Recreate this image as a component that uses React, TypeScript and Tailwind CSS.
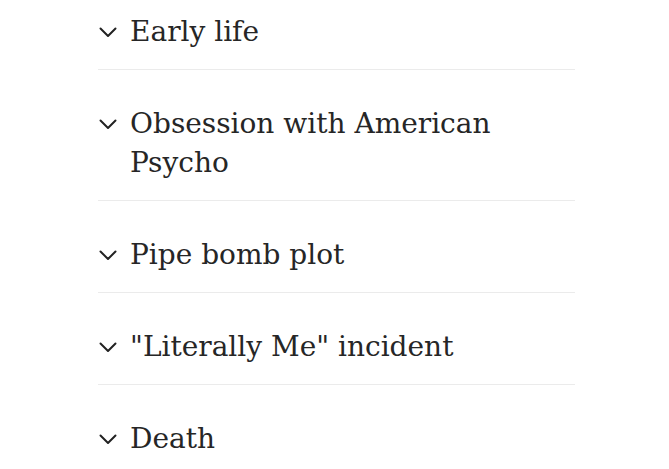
const sections = [
  'Early life',
  'Obsession with American Psycho',
  'Pipe bomb plot',
  '"Literally Me" incident',
  'Death',
];

function Chevron() {
  return (
    <svg width="18" height="11" viewBox="0 0 18 11" fill="none" className="shrink-0">
      <path d="M1.5 1.5L9 9L16.5 1.5" stroke="#222" strokeWidth="2" strokeLinecap="round" strokeLinejoin="round" />
    </svg>
  );
}

export default function App() {
  return (
    <div className="min-h-[469px] w-full overflow-hidden bg-white">
      <div className="ml-[98px] mt-[-22px] w-[477px]">
        {sections.map((title, i) => (
          <div
            key={title}
            className={`flex items-start pt-[34px] pb-[18px] ${i < sections.length - 1 ? 'border-b border-[#ebebeb]' : ''}`}
          >
            <div className="flex h-[39px] w-[32px] shrink-0 items-center pl-[1px] pt-[1px]">
              <Chevron />
            </div>
            <span className="pr-[70px] font-['DejaVu_Serif',Georgia,serif] text-[28px] leading-[39px] text-[#262626]">
              {title}
            </span>
          </div>
        ))}
      </div>
    </div>
  );
}
